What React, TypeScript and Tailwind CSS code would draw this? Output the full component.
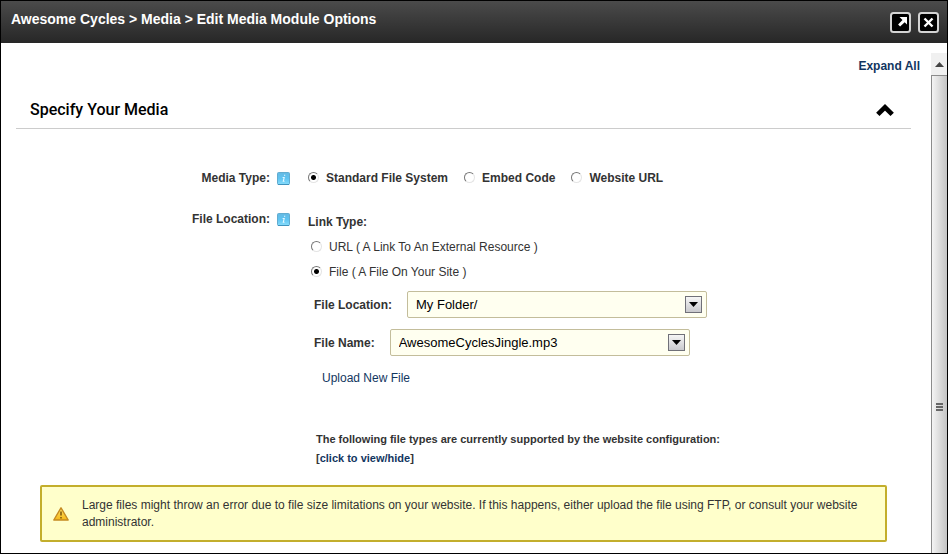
import React, { useState } from "react";

type RadioProps = {
  name: string;
  label: string;
  checked: boolean;
  onChange: () => void;
  bold?: boolean;
};

function RadioOption({ name, label, checked, onChange, bold }: RadioProps) {
  return (
    <label className={`flex items-center gap-[7px] ${bold ? "font-bold" : ""}`}>
      <input
        type="radio"
        name={name}
        checked={checked}
        onChange={onChange}
        className="mb-0.5 size-[11px] shrink-0 appearance-none rounded-full border border-t-[#777] border-r-[#e4e4e4] border-b-[#e4e4e4] border-l-[#777] bg-white checked:bg-[radial-gradient(circle,#000_2px,#fff_3px)]"
      />
      {label}
    </label>
  );
}

function InfoIcon() {
  return (
    <svg width="13" height="13" viewBox="0 0 13 13" aria-hidden="true" className="shrink-0">
      <defs>
        <linearGradient id="info" x1="0" y1="0" x2="0" y2="1">
          <stop offset="0" stopColor="#65b9e2" />
          <stop offset="0.5" stopColor="#5fc4f2" />
          <stop offset="1" stopColor="#86dcfb" />
        </linearGradient>
      </defs>
      <rect x="0.5" y="0.5" width="12" height="12" rx="1" fill="url(#info)" stroke="#62acd0" />
      <path d="M1 12.5h11" stroke="#3f93bd" />
      <path d="M7 3.2h1.2M5.6 5.5h1.6l-.9 3.7h1.2" fill="none" stroke="#e6f8ff" strokeWidth="1.1" />
    </svg>
  );
}

function SelectField({ id, label, value }: { id: string; label: string; value: string }) {
  return (
    <div className="flex items-center gap-[15px]">
      <label htmlFor={id} className="font-bold">
        {label}
      </label>
      <div className="relative w-[300px]">
        <select
          id={id}
          defaultValue={value}
          className="block h-[27px] w-full appearance-none rounded-xs border border-[#c3bd9b] bg-[#fffff0] pr-7 pl-2 text-[13px] text-black"
        >
          <option>{value}</option>
        </select>
        <span className="pointer-events-none absolute top-[5px] right-[5px] flex size-[17px] items-center justify-center border border-[#707078] bg-linear-to-b from-[#f6f6f6] to-[#c9c9cd]">
          <svg width="9" height="5" viewBox="0 0 9 5" aria-hidden="true">
            <path d="M0 0h9L4.5 5z" fill="#000" />
          </svg>
        </span>
      </div>
    </div>
  );
}

const mediaTypes = ["Standard File System", "Embed Code", "Website URL"];
const linkTypes = ["URL ( A Link To An External Resource )", "File ( A File On Your Site )"];

export default function App() {
  const [mediaType, setMediaType] = useState(mediaTypes[0]);
  const [linkType, setLinkType] = useState(linkTypes[1]);

  return (
    <div className="flex min-h-screen flex-col border border-black bg-white font-['Liberation_Sans',Arial,sans-serif] text-xs leading-4 text-[#333]">
      <header className="flex h-[42px] items-start justify-between bg-linear-to-b from-[#4b4b4b] to-[#272727] pr-2 pl-2.5">
        <h1 className="pt-2 text-sm leading-5 font-bold text-white">
          Awesome Cycles &gt; Media &gt; Edit Media Module Options
        </h1>
        <div className="flex gap-[7px] pt-[11px]">
          <button type="button" aria-label="Maximize">
            <svg width="21" height="21" viewBox="0 0 21 21">
              <rect x="1" y="1" width="19" height="19" rx="2.5" fill="#000" stroke="#d4d4d4" strokeWidth="2" />
              <path d="M9.5 5H17v7.5l-2.3-2.3-4.6 4.4-2-2 4.4-4.5z" fill="#fff" />
            </svg>
          </button>
          <button type="button" aria-label="Close">
            <svg width="21" height="21" viewBox="0 0 21 21">
              <rect x="1" y="1" width="19" height="19" rx="2.5" fill="#000" stroke="#d4d4d4" strokeWidth="2" />
              <path d="M6.5 6.5l8 8M14.5 6.5l-8 8" stroke="#fff" strokeWidth="2.4" />
            </svg>
          </button>
        </div>
      </header>

      <div className="flex flex-1">
        <main className="flex-1 pt-[15px] pr-[11px] pb-2.5 pl-[15px]">
          <div className="text-right">
            <a href="#" className="font-bold text-[#12365f]">
              Expand All
            </a>
          </div>

          <div className="mr-[9px]">
            <h2 className="mt-[22px] flex items-center justify-between border-b border-[#ccc] pr-4 pb-1 pl-3.5 font-[Roboto,sans-serif] text-base leading-7 font-medium text-black">
              Specify Your Media
              <button type="button" aria-label="Collapse section">
                <svg width="20" height="14" viewBox="0 0 20 14">
                  <path d="M2.8 11.4L10 4.4 17.2 11.4" fill="none" stroke="#000" strokeWidth="4.8" />
                </svg>
              </button>
            </h2>

            <form className="flex flex-col pt-[41px]">
              <div role="radiogroup" aria-labelledby="mediaTypeLabel" className="flex gap-[18px]">
                <div id="mediaTypeLabel" className="flex w-[274px] items-center justify-end gap-[7px] font-bold">
                  Media Type:
                  <InfoIcon />
                </div>
                <div className="flex gap-4">
                  {mediaTypes.map((type) => (
                    <RadioOption
                      key={type}
                      name="mediaType"
                      label={type}
                      checked={mediaType === type}
                      onChange={() => setMediaType(type)}
                      bold
                    />
                  ))}
                </div>
              </div>

              <div className="mt-6 flex items-start gap-[18px]">
                <div className="flex w-[274px] items-center justify-end gap-[7px] pt-px font-bold">
                  File Location:
                  <InfoIcon />
                </div>
                <div>
                  <fieldset>
                    <legend className="leading-[25px] font-bold">Link Type:</legend>
                    <div className="pl-[3px] leading-[25px]">
                      {linkTypes.map((type) => (
                        <RadioOption
                          key={type}
                          name="linkType"
                          label={type}
                          checked={linkType === type}
                          onChange={() => setLinkType(type)}
                        />
                      ))}
                    </div>
                  </fieldset>
                  <div className="mt-1.5 flex flex-col gap-[11px] pl-1.5">
                    <SelectField id="fileLocation" label="File Location:" value="My Folder/" />
                    <SelectField id="fileName" label="File Name:" value="AwesomeCyclesJingle.mp3" />
                  </div>
                  <a href="#" className="mt-3.5 ml-3.5 inline-block text-[#12365f]">
                    Upload New File
                  </a>
                  <p className="mt-11 pl-2 text-[11px] leading-[19px] font-bold">
                    The following file types are currently supported by the website configuration:
                    <br />[
                    <a href="#" className="text-[#12365f]">
                      click to view/hide
                    </a>
                    ]
                  </p>
                </div>
              </div>
            </form>

            <div
              role="alert"
              className="mx-6 mt-[17px] flex items-center gap-3 rounded-xs border-2 border-[#c3ae2c] bg-[#ffffcb] pt-2.5 pr-5 pb-[9px] pl-2.5"
            >
              <svg width="18" height="16" viewBox="0 0 18 16" aria-hidden="true" className="shrink-0">
                <defs>
                  <linearGradient id="warn" x1="0" y1="0" x2="0" y2="1">
                    <stop offset="0" stopColor="#ffe36a" />
                    <stop offset="1" stopColor="#f5b818" />
                  </linearGradient>
                </defs>
                <path d="M9 1.8L16.2 14H1.8z" fill="url(#warn)" stroke="#c58a22" strokeWidth="1.4" strokeLinejoin="round" />
                <path d="M9 5.5v4M9 11v1.6" stroke="#7a540c" strokeWidth="1.5" />
              </svg>
              <p className="leading-[17px]">
                Large files might throw an error due to file size limitations on your website. If this happens, either
                upload the file using FTP, or consult your website administrator.
              </p>
            </div>
          </div>
        </main>

        <div className="mt-2.5 flex w-4 flex-col" aria-hidden="true">
          <div className="flex h-[22px] items-center justify-center bg-[#f0f0f0]">
            <svg width="9" height="5" viewBox="0 0 9 5">
              <path d="M0 5h9L4.5 0z" fill="#444" />
            </svg>
          </div>
          <div className="flex flex-1 flex-col items-center justify-center gap-px border-t border-l border-[#8c8c8c] bg-linear-to-r from-[#f4f4f4] via-[#dcdcdc] to-[#c4c4c4] pt-[184px]">
            <span className="h-0.5 w-[7px] bg-[#666]" />
            <span className="h-0.5 w-[7px] bg-[#666]" />
            <span className="h-0.5 w-[7px] bg-[#666]" />
          </div>
        </div>
      </div>
    </div>
  );
}
